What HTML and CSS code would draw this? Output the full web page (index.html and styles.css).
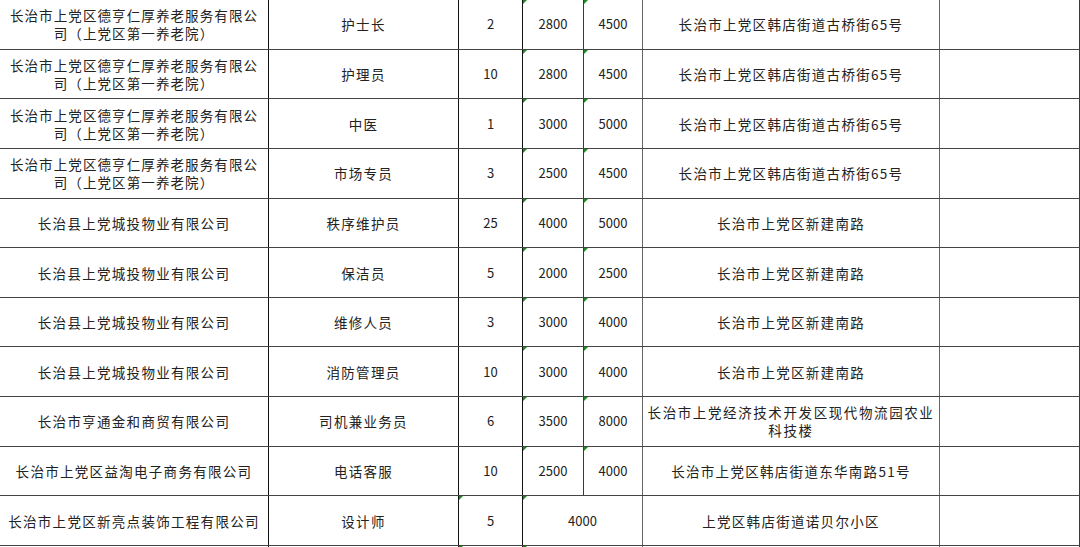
FILE: index.html
```html
<!DOCTYPE html>
<html lang="zh-CN">
<head>
<meta charset="utf-8">
<title>招聘信息</title>
<link rel="stylesheet" href="styles.css">
</head>
<body>
<table class="sheet">
  <colgroup>
    <col class="c-company"><col class="c-pos"><col class="c-num"><col class="c-min"><col class="c-max"><col class="c-addr"><col class="c-note">
  </colgroup>
  <tbody>
    <tr>
      <td class="company tight">长治市上党区德亨仁厚养老服务有限公<br>司（上党区第一养老院）</td>
      <td class="pos">护士长</td>
      <td class="num">2</td>
      <td class="money min flag">2800</td>
      <td class="money max flag">4500</td>
      <td class="addr">长治市上党区韩店街道古桥街65号</td>
      <td class="note"></td>
    </tr>
    <tr>
      <td class="company tight">长治市上党区德亨仁厚养老服务有限公<br>司（上党区第一养老院）</td>
      <td class="pos">护理员</td>
      <td class="num">10</td>
      <td class="money min flag">2800</td>
      <td class="money max flag">4500</td>
      <td class="addr">长治市上党区韩店街道古桥街65号</td>
      <td class="note"></td>
    </tr>
    <tr>
      <td class="company tight">长治市上党区德亨仁厚养老服务有限公<br>司（上党区第一养老院）</td>
      <td class="pos">中医</td>
      <td class="num">1</td>
      <td class="money min flag">3000</td>
      <td class="money max flag">5000</td>
      <td class="addr">长治市上党区韩店街道古桥街65号</td>
      <td class="note"></td>
    </tr>
    <tr>
      <td class="company tight">长治市上党区德亨仁厚养老服务有限公<br>司（上党区第一养老院）</td>
      <td class="pos">市场专员</td>
      <td class="num">3</td>
      <td class="money min flag">2500</td>
      <td class="money max flag">4500</td>
      <td class="addr">长治市上党区韩店街道古桥街65号</td>
      <td class="note"></td>
    </tr>
    <tr>
      <td class="company">长治县上党城投物业有限公司</td>
      <td class="pos">秩序维护员</td>
      <td class="num">25</td>
      <td class="money min flag">4000</td>
      <td class="money max flag">5000</td>
      <td class="addr">长治市上党区新建南路</td>
      <td class="note"></td>
    </tr>
    <tr>
      <td class="company">长治县上党城投物业有限公司</td>
      <td class="pos">保洁员</td>
      <td class="num">5</td>
      <td class="money min flag">2000</td>
      <td class="money max flag">2500</td>
      <td class="addr">长治市上党区新建南路</td>
      <td class="note"></td>
    </tr>
    <tr>
      <td class="company">长治县上党城投物业有限公司</td>
      <td class="pos">维修人员</td>
      <td class="num">3</td>
      <td class="money min flag">3000</td>
      <td class="money max flag">4000</td>
      <td class="addr">长治市上党区新建南路</td>
      <td class="note"></td>
    </tr>
    <tr>
      <td class="company">长治县上党城投物业有限公司</td>
      <td class="pos">消防管理员</td>
      <td class="num">10</td>
      <td class="money min flag">3000</td>
      <td class="money max flag">4000</td>
      <td class="addr">长治市上党区新建南路</td>
      <td class="note"></td>
    </tr>
    <tr>
      <td class="company">长治市亨通金和商贸有限公司</td>
      <td class="pos">司机兼业务员</td>
      <td class="num">6</td>
      <td class="money min flag">3500</td>
      <td class="money max flag">8000</td>
      <td class="addr wide">长治市上党经济技术开发区现代物流园农业<br>科技楼</td>
      <td class="note"></td>
    </tr>
    <tr>
      <td class="company">长治市上党区益淘电子商务有限公司</td>
      <td class="pos">电话客服</td>
      <td class="num">10</td>
      <td class="money min flag">2500</td>
      <td class="money max flag">4000</td>
      <td class="addr">长治市上党区韩店街道东华南路51号</td>
      <td class="note"></td>
    </tr>
    <tr>
      <td class="company">长治市上党区新亮点装饰工程有限公司</td>
      <td class="pos">设计师</td>
      <td class="num flag">5</td>
      <td class="money max flag" colspan="2">4000</td>
      <td class="addr">上党区韩店街道诺贝尔小区</td>
      <td class="note"></td>
    </tr>
    <tr>
      <td class="company"></td>
      <td class="pos"></td>
      <td class="num flag"></td>
      <td class="money max flag" colspan="2"></td>
      <td class="addr"></td>
      <td class="note"></td>
    </tr>
  </tbody>
</table>
</body>
</html>
```

FILE: styles.css
```css
html, body {
  margin: 0;
  padding: 0;
  background: #ffffff;
}

body {
  overflow: hidden;
  height: 547px;
}

.sheet {
  border-collapse: collapse;
  table-layout: fixed;
  width: 1080px;
  margin: -1px 0 0 -1px;
  font-family: "Noto Sans CJK SC", "Noto Sans", sans-serif;
  font-size: 13.5px;
  color: #222222;
}

.c-company { width: 269px; }
.c-pos { width: 190px; }
.c-num { width: 64px; }
.c-min { width: 61px; }
.c-max { width: 59px; }
.c-addr { width: 297px; }
.c-note { width: 140px; }

.sheet tr {
  height: 49.65px;
}

.sheet td {
  position: relative;
  padding: 0;
  text-align: center;
  vertical-align: middle;
  line-height: 18px;
  letter-spacing: 1.3px;
  white-space: nowrap;
  border: 1px solid #444444;
}

.sheet td.company,
.sheet td.pos,
.sheet td.num {
  border-right-color: #111111;
}

.sheet td.min {
  border-right-color: #3a3a3a;
}

.sheet td.max {
  border-right-color: #666666;
}

.sheet td.addr {
  border-right-color: #666666;
}

.sheet td.note {
  border-right-color: #3a3a3a;
}

.sheet td.company.tight {
  letter-spacing: 1.1px;
}

.sheet td.addr.wide {
  letter-spacing: 1.6px;
}

.sheet td.num,
.sheet td.money {
  font-size: 13px;
  letter-spacing: 0;
}

.sheet td.flag::before {
  content: "";
  position: absolute;
  left: 0;
  top: 0;
  width: 0;
  height: 0;
  border-top: 4px solid #1a8a1a;
  border-right: 4px solid transparent;
}
```
